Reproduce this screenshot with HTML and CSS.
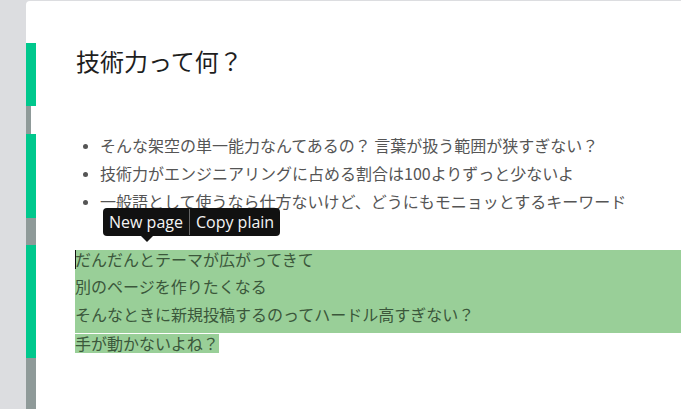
FILE: index.html
```html
<!DOCTYPE html>
<html lang="ja">
<head>
<meta charset="utf-8">
<link rel="stylesheet" href="styles.css">
</head>
<body>
<div class="page">
  <div class="gutter"></div>
  <div class="card">
    <div class="stripe">
      <div class="seg blank h42"></div>
      <div class="seg green h63"></div>
      <div class="seg grey narrow h28"></div>
      <div class="seg green h84"></div>
      <div class="seg grey h27"></div>
      <div class="seg green h113"></div>
      <div class="seg grey fill"></div>
    </div>
    <div class="content">
      <h1 class="title">技術力って何？</h1>
      <ul class="list">
        <li>そんな架空の単一能力なんてあるの？ 言葉が扱う範囲が狭すぎない？</li>
        <li>技術力がエンジニアリングに占める割合は100よりずっと少ないよ</li>
        <li>一般語として使うなら仕方ないけど、どうにもモニョッとするキーワード</li>
      </ul>
      <div class="selection">
        <div class="sel-line"><span class="caret"></span>だんだんとテーマが広がってきて</div>
        <div class="sel-line">別のページを作りたくなる</div>
        <div class="sel-line">そんなときに新規投稿するのってハードル高すぎない？</div>
        <div class="last-line"><span class="sel-inline">手が動かないよね？</span></div>
      </div>
      <div class="tooltip">
        <span class="tip-btn">New page</span><span class="tip-sep"></span><span class="tip-btn">Copy plain</span>
      </div>
    </div>
  </div>
</div>
</body>
</html>
```
FILE: styles.css
```css
html, body {
  margin: 0;
  padding: 0;
  height: 100%;
  overflow: hidden;
}
body {
  background: #dcdde0;
  font-family: "Noto Sans CJK JP", "Noto Sans", sans-serif;
}
.page {
  display: flex;
  height: 409px;
}
.gutter {
  width: 26px;
  flex: none;
}
.card {
  flex: 1;
  margin-top: 1px;
  background: #ffffff;
  border-top-left-radius: 4px;
  display: flex;
  position: relative;
}
.stripe {
  width: 10px;
  flex: none;
  display: flex;
  flex-direction: column;
}
.seg { width: 10px; }
.seg.green { background: #00c88d; }
.seg.grey { background: #8f9a99; }
.seg.narrow { width: 5px; }
.seg.fill { flex: 1; }
.h42 { height: 42px; }
.h63 { height: 63px; }
.h28 { height: 28px; }
.h84 { height: 84px; }
.h27 { height: 27px; }
.h113 { height: 113px; }
.content {
  flex: 1;
  position: relative;
  padding-left: 39px;
}
.title {
  margin: 42px 0 0 1px;
  font-size: 24px;
  line-height: 36px;
  font-weight: 400;
  color: #1e1e1e;
}
.list {
  margin: 52px 0 0 1px;
  padding-left: 24px;
  font-size: 16px;
  line-height: 28px;
  color: #555555;
}
.list li::marker {
  font-size: 13px;
}
.selection {
  margin-top: 35px;
  font-size: 16px;
  color: #3b573b;
}
.sel-line {
  background: #99cf98;
  height: 28px;
  line-height: 18px;
  position: relative;
}
.sel-line:first-child { height: 27px; }
.caret {
  position: absolute;
  left: 0;
  top: 0;
  width: 1px;
  height: 19px;
  background: #111;
}
.last-line {
  height: 28px;
  line-height: 20px;
}
.sel-inline {
  background: #99cf98;
  display: inline-block;
  line-height: 19px;
}
.tooltip {
  position: absolute;
  left: 67px;
  top: 207px;
  display: flex;
  align-items: stretch;
  background: #111111;
  border-radius: 4px;
  height: 28px;
  font-family: "Open Sans", sans-serif;
  font-size: 16px;
  font-weight: 500;
  color: #f4f4f4;
}
.tooltip::after {
  content: "";
  position: absolute;
  left: 38px;
  bottom: -6px;
  border-left: 6px solid transparent;
  border-right: 6px solid transparent;
  border-top: 6px solid #111111;
}
.tip-btn {
  display: flex;
  align-items: center;
  padding: 0 6px 0 6px;
}
.tip-sep {
  width: 1px;
  background: #666;
  margin: 1px 0;
}
```
